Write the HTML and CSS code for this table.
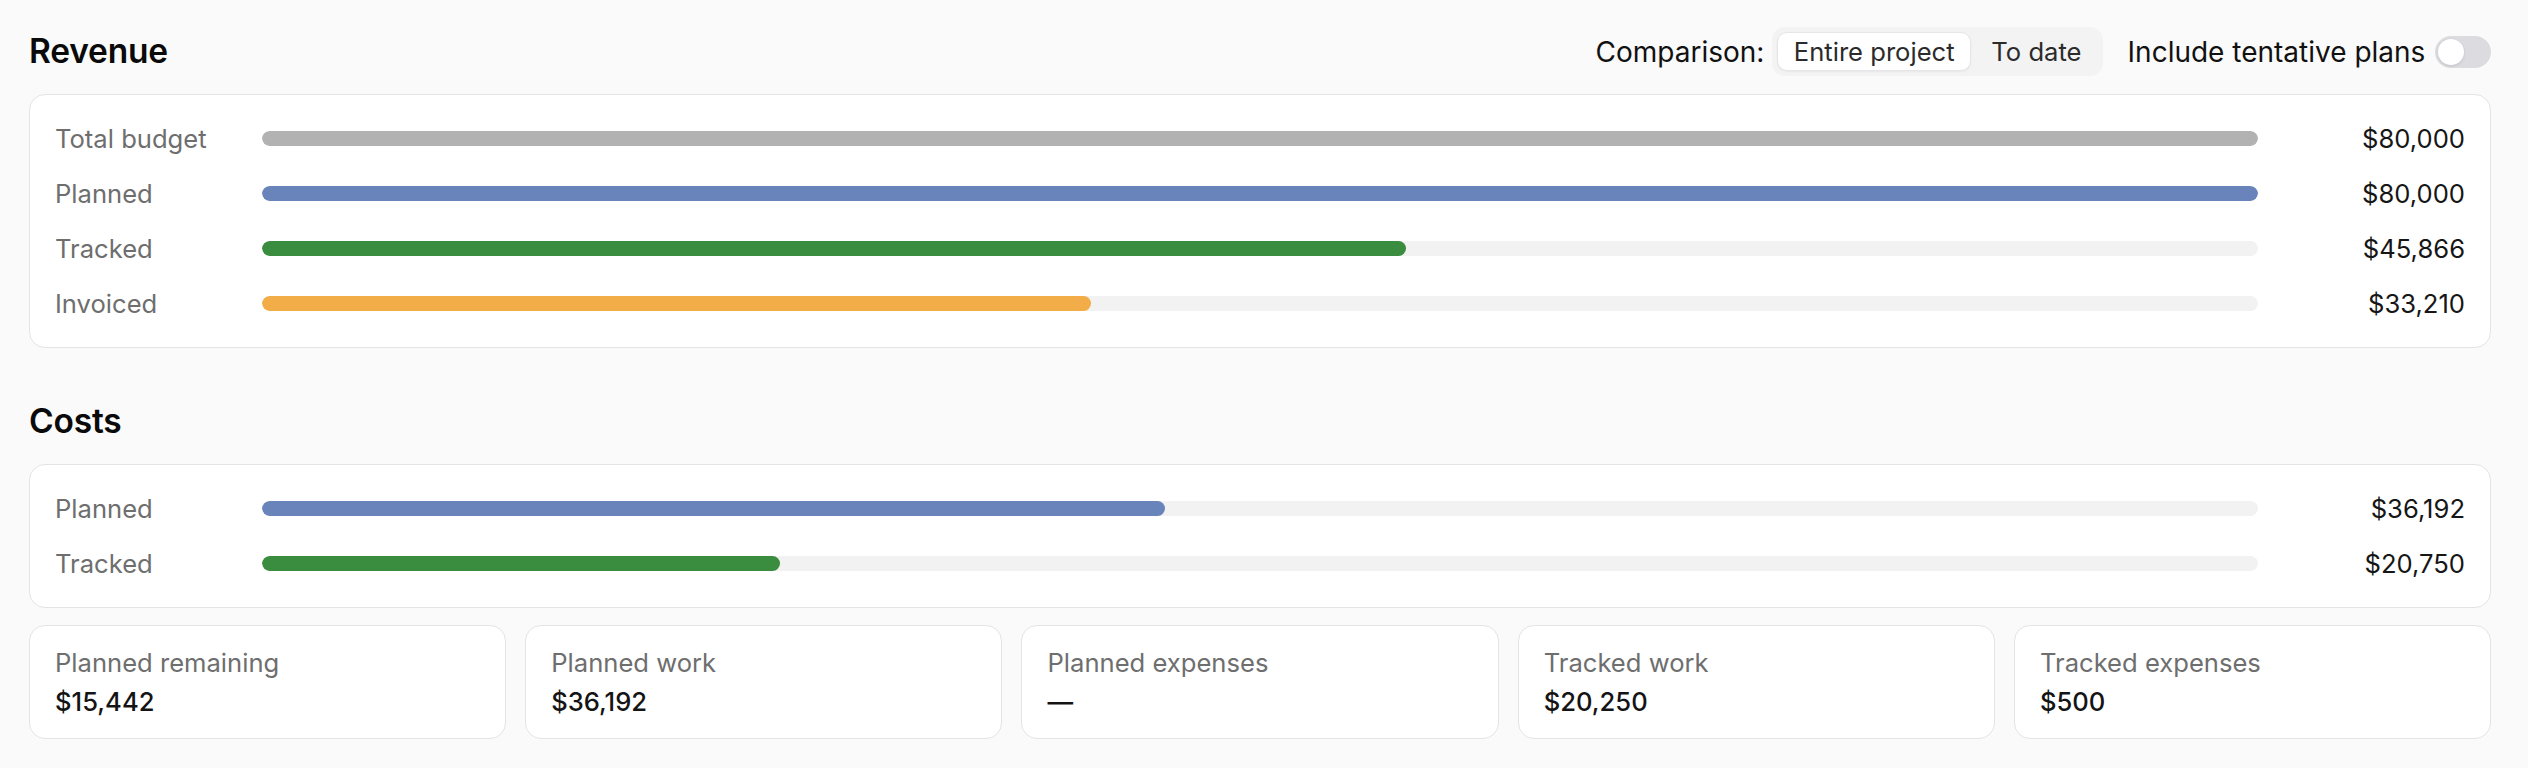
FILE: index.html
```html
<!DOCTYPE html>
<html lang="en">
<head>
<meta charset="utf-8">
<title>Project financials</title>
<link rel="stylesheet" href="styles.css">
</head>
<body>
<main class="page">
  <section class="section">
    <header class="section-head">
      <h2 class="section-title">Revenue</h2>
      <div class="controls">
        <span class="control-label">Comparison:</span>
        <div class="segmented">
          <button class="seg-btn is-active" type="button">Entire project</button>
          <button class="seg-btn" type="button">To date</button>
        </div>
        <label class="toggle-wrap">
          <span class="control-label">Include tentative plans</span>
          <span class="toggle"><span class="knob"></span></span>
        </label>
      </div>
    </header>
    <div class="card bars">
      <div class="bar-row">
        <span class="bar-label">Total budget</span>
        <div class="track"><div class="fill fill-gray" style="width:100%"></div></div>
        <span class="bar-value">$80,000</span>
      </div>
      <div class="bar-row">
        <span class="bar-label">Planned</span>
        <div class="track"><div class="fill fill-blue" style="width:100%"></div></div>
        <span class="bar-value">$80,000</span>
      </div>
      <div class="bar-row">
        <span class="bar-label">Tracked</span>
        <div class="track"><div class="fill fill-green" style="width:57.33%"></div></div>
        <span class="bar-value">$45,866</span>
      </div>
      <div class="bar-row">
        <span class="bar-label">Invoiced</span>
        <div class="track"><div class="fill fill-orange" style="width:41.51%"></div></div>
        <span class="bar-value">$33,210</span>
      </div>
    </div>
  </section>

  <section class="section section-costs">
    <header class="section-head">
      <h2 class="section-title">Costs</h2>
    </header>
    <div class="card bars">
      <div class="bar-row">
        <span class="bar-label">Planned</span>
        <div class="track"><div class="fill fill-blue" style="width:45.24%"></div></div>
        <span class="bar-value">$36,192</span>
      </div>
      <div class="bar-row">
        <span class="bar-label">Tracked</span>
        <div class="track"><div class="fill fill-green" style="width:25.94%"></div></div>
        <span class="bar-value">$20,750</span>
      </div>
    </div>
    <div class="stats">
      <div class="card stat">
        <div class="stat-label">Planned remaining</div>
        <div class="stat-value">$15,442</div>
      </div>
      <div class="card stat">
        <div class="stat-label">Planned work</div>
        <div class="stat-value">$36,192</div>
      </div>
      <div class="card stat">
        <div class="stat-label">Planned expenses</div>
        <div class="stat-value">—</div>
      </div>
      <div class="card stat">
        <div class="stat-label">Tracked work</div>
        <div class="stat-value">$20,250</div>
      </div>
      <div class="card stat">
        <div class="stat-label">Tracked expenses</div>
        <div class="stat-value">$500</div>
      </div>
    </div>
  </section>
</main>
</body>
</html>
```
FILE: styles.css
```css
* { box-sizing: border-box; }

html, body {
  margin: 0;
  background: #fafafa;
}

body {
  font-family: Inter, "Noto Sans", "Liberation Sans", sans-serif;
  color: #111111;
}

.page {
  padding: 27px 37px 0 29px;
}

.section-costs {
  margin-top: 49.5px;
}

.section-head {
  display: flex;
  align-items: center;
  justify-content: space-between;
  height: 49.4px;
  margin-bottom: 17.4px;
}

.section-title {
  margin: 0;
  font-size: 33.5px;
  font-weight: 600;
  line-height: 1;
  color: #0a0a0a;
  letter-spacing: -0.2px;
}

.controls {
  display: flex;
  align-items: center;
}

.control-label {
  font-size: 28px;
  color: #111111;
  line-height: 1;
}

.segmented {
  display: flex;
  gap: 4px;
  margin-left: 8px;
  padding: 5px;
  background: #f3f3f4;
  border-radius: 13px;
}

.seg-btn {
  height: 39.4px;
  padding: 0 15.4px;
  border: 1px solid transparent;
  border-radius: 10px;
  background: transparent;
  font-family: inherit;
  font-size: 25.6px;
  color: #2b2b2b;
  cursor: pointer;
}

.seg-btn.is-active {
  background: #ffffff;
  border-color: #e6e6e9;
  box-shadow: 0 1px 2px rgba(0, 0, 0, 0.05);
}

.toggle-wrap {
  display: flex;
  align-items: center;
  gap: 9.6px;
  margin-left: 24.7px;
}

.toggle {
  display: flex;
  align-items: center;
  width: 56px;
  height: 32px;
  padding: 3px;
  border-radius: 16px;
  background: #dcdce0;
}

.knob {
  width: 26px;
  height: 26px;
  border-radius: 50%;
  background: #ffffff;
  box-shadow: 0 1px 3px rgba(0, 0, 0, 0.12);
}

.card {
  background: #ffffff;
  border: 1px solid #e4e4e8;
  border-radius: 16px;
}

.bars {
  padding: 16px 25px;
}

.bar-row {
  display: grid;
  grid-template-columns: 207px 1fr 207px;
  align-items: center;
  height: 55px;
}

.bar-label {
  font-size: 25.6px;
  color: #6e6e6e;
}

.bar-value {
  font-size: 25.6px;
  color: #161616;
  text-align: right;
}

.track {
  height: 15.5px;
  border-radius: 8px;
  background: #f2f2f2;
  overflow: hidden;
}

.fill {
  height: 100%;
  border-radius: 8px;
}

.fill-gray { background: #b2b2b2; }
.fill-blue { background: #6983bb; }
.fill-green { background: #3a8c3e; }
.fill-orange { background: #f2ac48; }

.stats {
  display: grid;
  grid-template-columns: repeat(5, 1fr);
  gap: 19.2px;
  margin-top: 17.4px;
}

.stat {
  padding: 17.5px 25px 16.5px;
}

.stat-label {
  font-size: 25.6px;
  line-height: 38px;
  color: #6e6e6e;
}

.stat-value {
  margin-top: 1.5px;
  font-size: 25.6px;
  line-height: 38px;
  font-weight: 500;
  color: #141414;
}
```
